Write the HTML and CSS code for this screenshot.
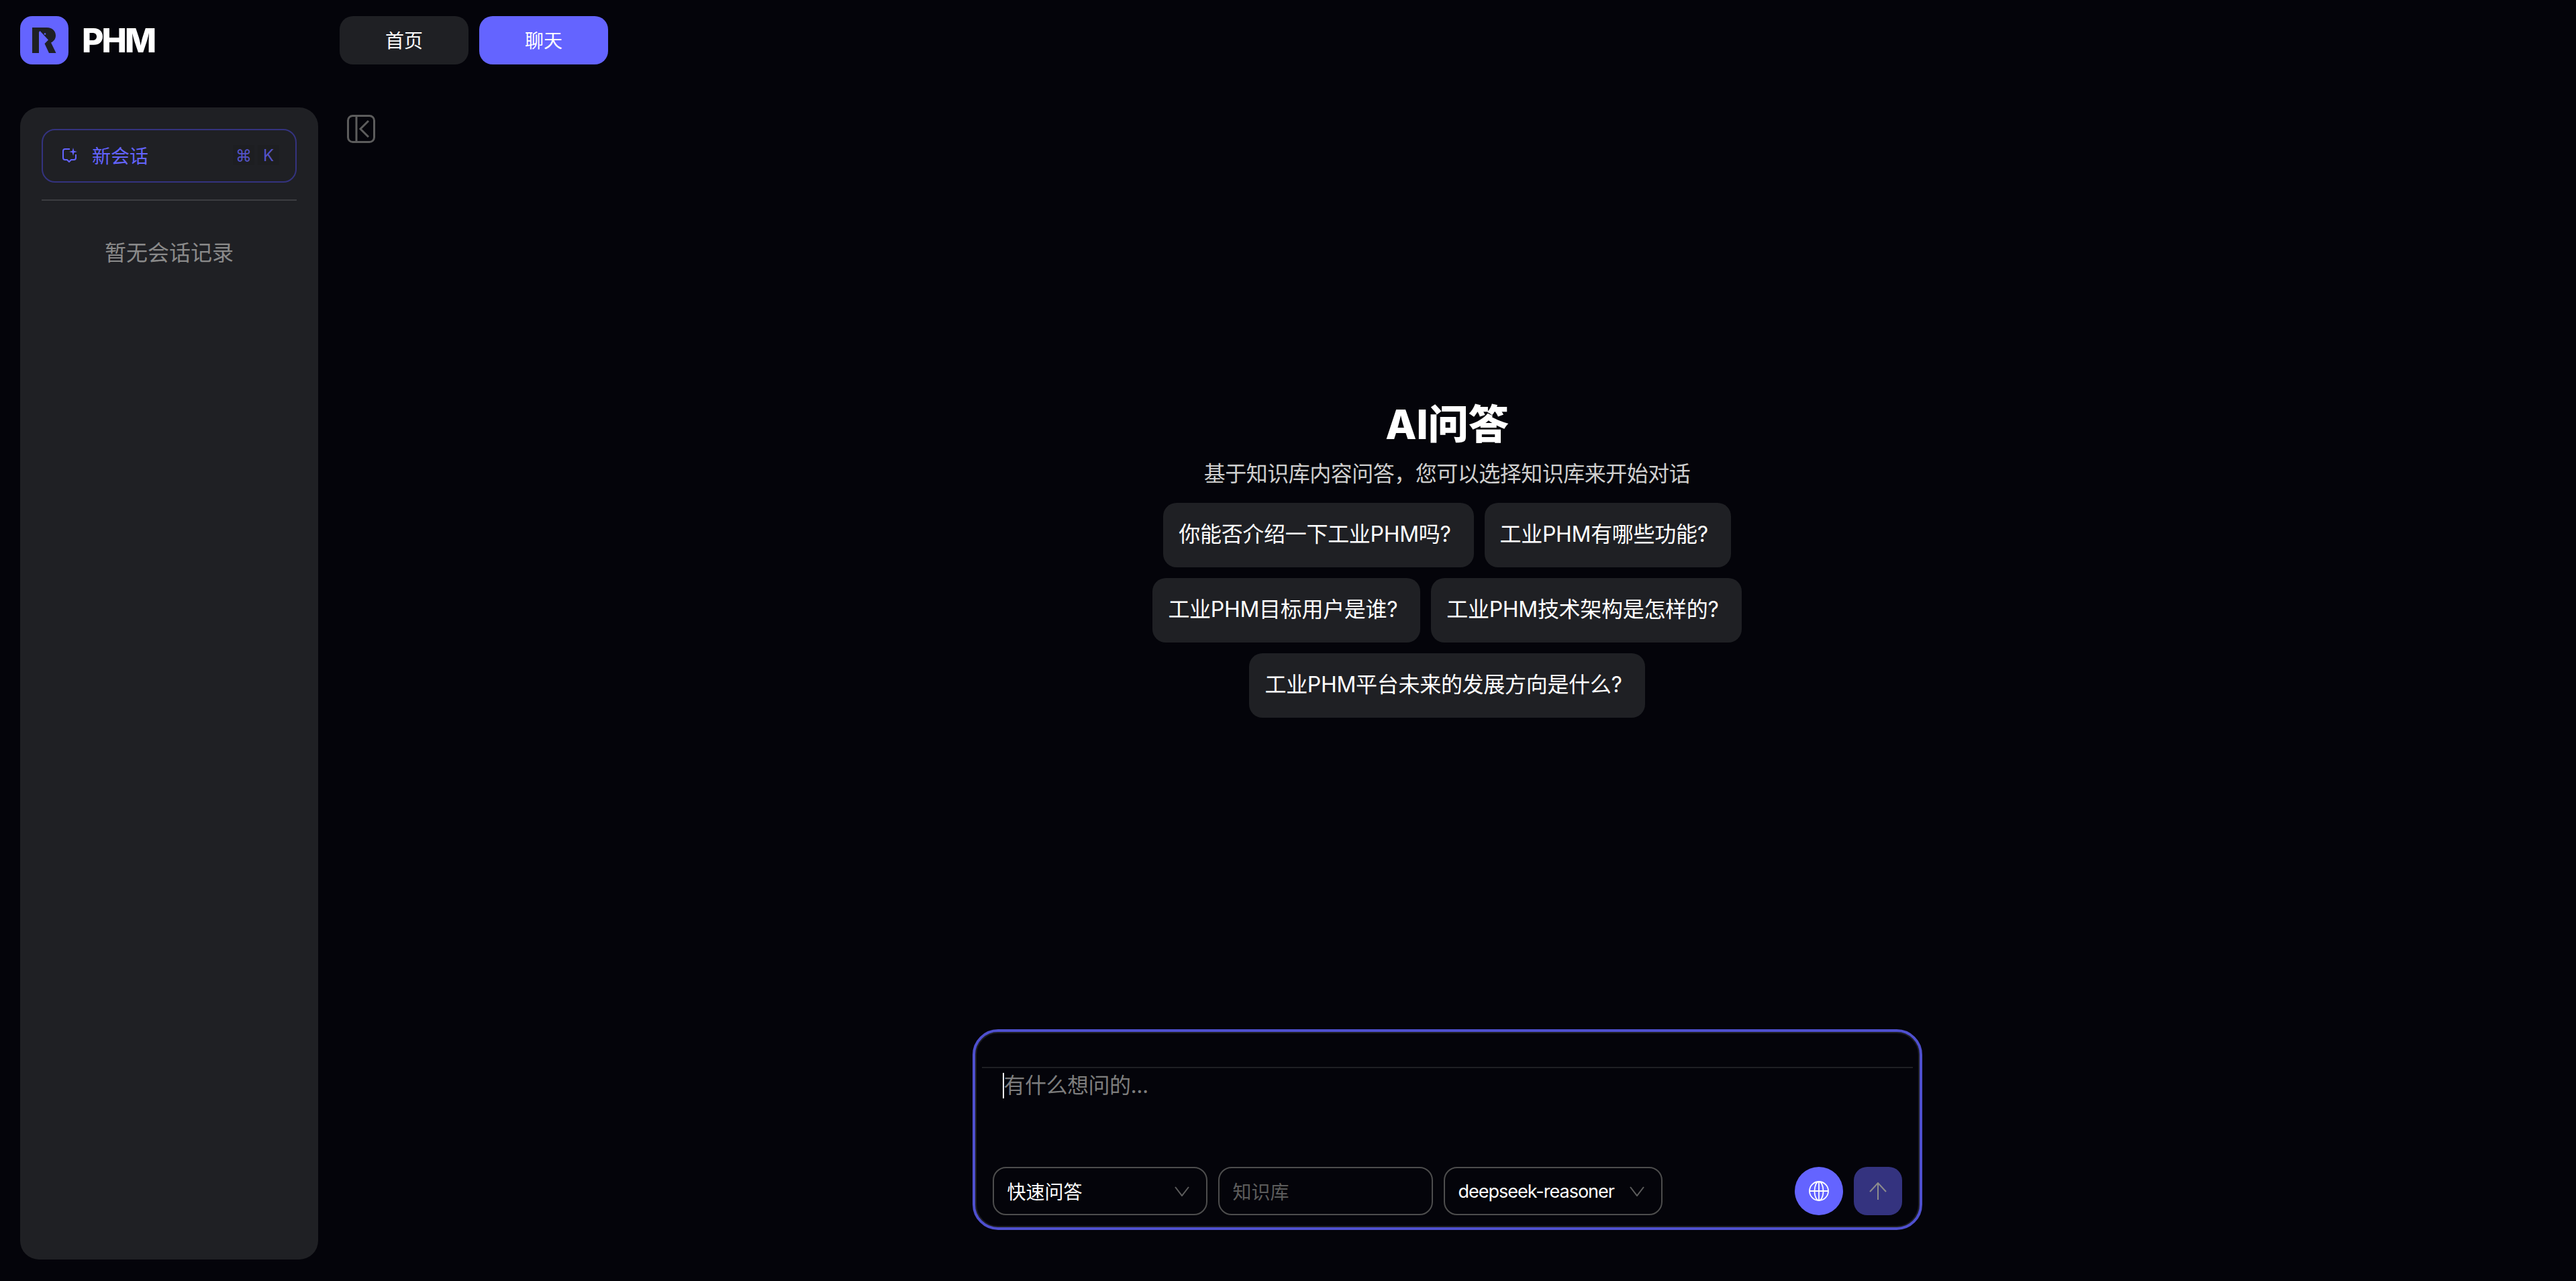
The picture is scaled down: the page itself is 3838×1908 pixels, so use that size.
FILE: index.html
```html
<!DOCTYPE html>
<html lang="zh-CN">
<head>
    <meta charset="UTF-8">
    <meta name="viewport" content="width=device-width, initial-scale=1.0">
    <title>PHM</title>
    <link rel="stylesheet" href="styles.css">
</head>
<body>
    <header class="topbar">
        <div class="brand">
            <div class="brand-logo">
                <svg width="36" height="38" viewBox="0 0 36 38">
                    <path fill="#1f2024" d="M0 0H22C30 0 35 5 35 12C35 17 32 20.500 28 22.500L35.500 38H25L18.500 24L24 18.500L11.500 5L10 7V38H0Z"/>
                    <circle cx="19" cy="9.500" r="1.300" fill="#6464ff"/>
                </svg>
            </div>
            <span class="brand-name">PHM</span>
        </div>
        <nav class="nav">
            <button class="nav-btn">首页</button>
            <button class="nav-btn active">聊天</button>
        </nav>
    </header>

    <div class="layout">
        <aside class="sidebar">
            <button class="new-chat">
                <svg class="new-chat-icon" width="22" height="22" viewBox="0 0 22 22" fill="none" stroke="#6464ff" stroke-width="2">
                    <path d="M11 2H4Q1 2 1 5V15Q1 18 4 18H7L10 21L13 18H17Q20 18 20 15V10"/>
                    <path fill="#6464ff" stroke="none" d="M16 0L17.300 4.700L22 6L17.300 7.300L16 12L14.700 7.300L10 6L14.700 4.700Z"/>
                </svg>
                <span class="new-chat-label">新会话</span>
                <span class="keys">
                    <kbd class="key">⌘</kbd>
                    <kbd class="key">K</kbd>
                </span>
            </button>
            <div class="sidebar-line"></div>
            <p class="empty">暂无会话记录</p>
        </aside>

        <main class="main">
            <button class="collapse">
                <svg width="42" height="42" viewBox="0 0 42 42" fill="none" stroke="#5c5c5c" stroke-width="3">
                    <rect x="1.500" y="1.500" width="39" height="39" rx="7"/>
                    <path d="M14 1.500V40.500"/>
                    <path d="M32 9L20 21L32 33"/>
                </svg>
            </button>

            <section class="welcome">
                <h1 class="title">AI问答</h1>
                <p class="subtitle">基于知识库内容问答&#xFF0C;您可以选择知识库来开始对话</p>
                <div class="chips">
                    <button class="chip">你能否介绍一下工业PHM吗?</button>
                    <button class="chip">工业PHM有哪些功能?</button>
                    <button class="chip">工业PHM目标用户是谁?</button>
                    <button class="chip">工业PHM技术架构是怎样的?</button>
                    <button class="chip">工业PHM平台未来的发展方向是什么?</button>
                </div>
            </section>

            <section class="composer">
                <div class="composer-top"></div>
                <div class="composer-input"><span class="caret"></span>有什么想问的...</div>
                <div class="composer-bar">
                    <div class="select">
                        <span>快速问答</span>
                        <svg width="22" height="15" viewBox="0 0 22 15" fill="none" stroke="#5c5c5c" stroke-width="2"><path d="M1 1L11 14L21 1"/></svg>
                    </div>
                    <div class="select placeholder"><span>知识库</span></div>
                    <div class="select model">
                        <span>deepseek-reasoner</span>
                        <svg width="22" height="15" viewBox="0 0 22 15" fill="none" stroke="#5c5c5c" stroke-width="2"><path d="M1 1L11 14L21 1"/></svg>
                    </div>
                    <button class="web-btn">
                        <svg width="30" height="30" viewBox="0 0 30 30" fill="none" stroke="#fff" stroke-width="1.800">
                            <circle cx="15" cy="15" r="14"/>
                            <ellipse cx="15" cy="15" rx="6.500" ry="14"/>
                            <path d="M15 1V29M1 15H29"/>
                        </svg>
                    </button>
                    <button class="send-btn">
                        <svg width="26" height="26" viewBox="0 0 26 26" fill="none" stroke="#8c8c8c" stroke-width="2">
                            <path d="M13 26V1M1 14L13 1L25 14"/>
                        </svg>
                    </button>
                </div>
            </section>
        </main>
    </div>
</body>
</html>
```

FILE: styles.css
```css
* {
    box-sizing: border-box;
}
html, body {
    height: 100%;
}
body {
    margin: 0;
    background: #04040a;
    color: #fff;
    font-family: Inter, 'Noto Sans CJK SC', sans-serif;
    display: flex;
    flex-direction: column;
}
button {
    font-family: inherit;
    border: none;
    cursor: pointer;
    padding: 0;
}
.topbar {
    display: flex;
    align-items: center;
    height: 160px;
    padding: 0 30px 40px;
    flex-shrink: 0;
}
.brand {
    display: flex;
    align-items: center;
    gap: 20px;
    width: 476px;
}
.brand-logo {
    width: 72px;
    height: 72px;
    border-radius: 18px;
    background: #6464ff;
    display: flex;
    align-items: center;
    justify-content: center;
}
.brand-name {
    font-size: 50px;
    font-weight: 800;
    letter-spacing: -3px;
}
.nav {
    display: flex;
    gap: 16px;
}
.nav-btn {
    width: 192px;
    height: 72px;
    padding-bottom: 2px;
    border-radius: 20px;
    background: #1f2024;
    color: #fff;
    font-size: 28px;
}
.nav-btn.active {
    background: #6464ff;
}
.layout {
    flex: 1;
    display: flex;
    padding: 0 0 32px 30px;
    min-height: 0;
}
.sidebar {
    width: 444px;
    flex-shrink: 0;
    background: #1f2024;
    border-radius: 28px;
    padding: 32px;
}
.new-chat {
    width: 100%;
    height: 80px;
    border: 2px solid #34337f;
    border-radius: 20px;
    background: transparent;
    display: flex;
    align-items: center;
    padding: 0 24px 2px 29px;
    color: #6464ff;
}
.new-chat-icon {
    margin-right: 22px;
}
.new-chat-label {
    font-size: 28px;
}
.keys {
    margin-left: auto;
    display: flex;
    gap: 5px;
}
.key {
    width: 32px;
    height: 30px;
    background: #1d1e21;
    color: #5553c8;
    font-family: inherit;
    font-size: 24px;
    display: flex;
    align-items: center;
    justify-content: center;
}
.sidebar-line {
    height: 2px;
    background: #3c3d41;
    margin-top: 25px;
}
.empty {
    margin: 54px 0 0;
    text-align: center;
    font-size: 32px;
    line-height: 48px;
    color: #8a8a8a;
}
.main {
    flex: 1;
    min-width: 0;
    display: flex;
    flex-direction: column;
    align-items: center;
    position: relative;
}
.collapse {
    position: absolute;
    left: 43px;
    top: 11px;
    background: none;
    line-height: 0;
}
.welcome {
    margin-top: 432px;
    display: flex;
    flex-direction: column;
    align-items: center;
}
.title {
    margin: 0;
    font-size: 60px;
    line-height: 80px;
    font-weight: 800;
}
.subtitle {
    margin: 10px 0 0;
    font-size: 32px;
    line-height: 48px;
    letter-spacing: -0.500px;
    color: #cfcfcf;
}
.chips {
    margin-top: 19px;
    width: 900px;
    display: flex;
    flex-wrap: wrap;
    justify-content: center;
    gap: 16px;
}
.chip {
    height: 96px;
    padding: 0 34px 8px 23px;
    border-radius: 20px;
    background: #1f2024;
    color: #fff;
    font-size: 32px;
    letter-spacing: -0.300px;
    white-space: nowrap;
}
.composer {
    margin: auto 0 48px;
    width: 1407px;
    height: 291px;
    border: 2px solid #1f2024;
    outline: 4px solid #4f50cf;
    border-radius: 34px;
    display: flex;
    flex-direction: column;
    padding: 0 8px;
}
.composer-top {
    height: 52px;
    flex-shrink: 0;
    border-bottom: 2px solid #1f2024;
}
.composer-input {
    flex: 1;
    padding: 2px 0 0 33px;
    font-size: 32px;
    line-height: 48px;
    letter-spacing: -0.500px;
    color: #7d7d7d;
    position: relative;
}
.caret {
    position: absolute;
    left: 31px;
    top: 7px;
    width: 2px;
    height: 38px;
    background: #fff;
}
.composer-bar {
    display: flex;
    align-items: center;
    gap: 16px;
    padding: 0 16px 16px;
}
.select {
    width: 320px;
    height: 72px;
    border: 2px solid #4d4d4d;
    border-radius: 20px;
    display: flex;
    align-items: center;
    justify-content: space-between;
    padding: 0 25px 0 20px;
    font-size: 28px;
}
.select.placeholder {
    color: #5c5c5c;
}
.select.model {
    width: 326px;
    margin-right: auto;
    font-size: 27px;
    letter-spacing: -1px;
}
.web-btn {
    width: 72px;
    height: 72px;
    border-radius: 50%;
    background: #6464ff;
    display: flex;
    align-items: center;
    justify-content: center;
}
.send-btn {
    width: 72px;
    height: 72px;
    border-radius: 20px;
    background: #34337f;
    display: flex;
    align-items: center;
    justify-content: center;
}
```
